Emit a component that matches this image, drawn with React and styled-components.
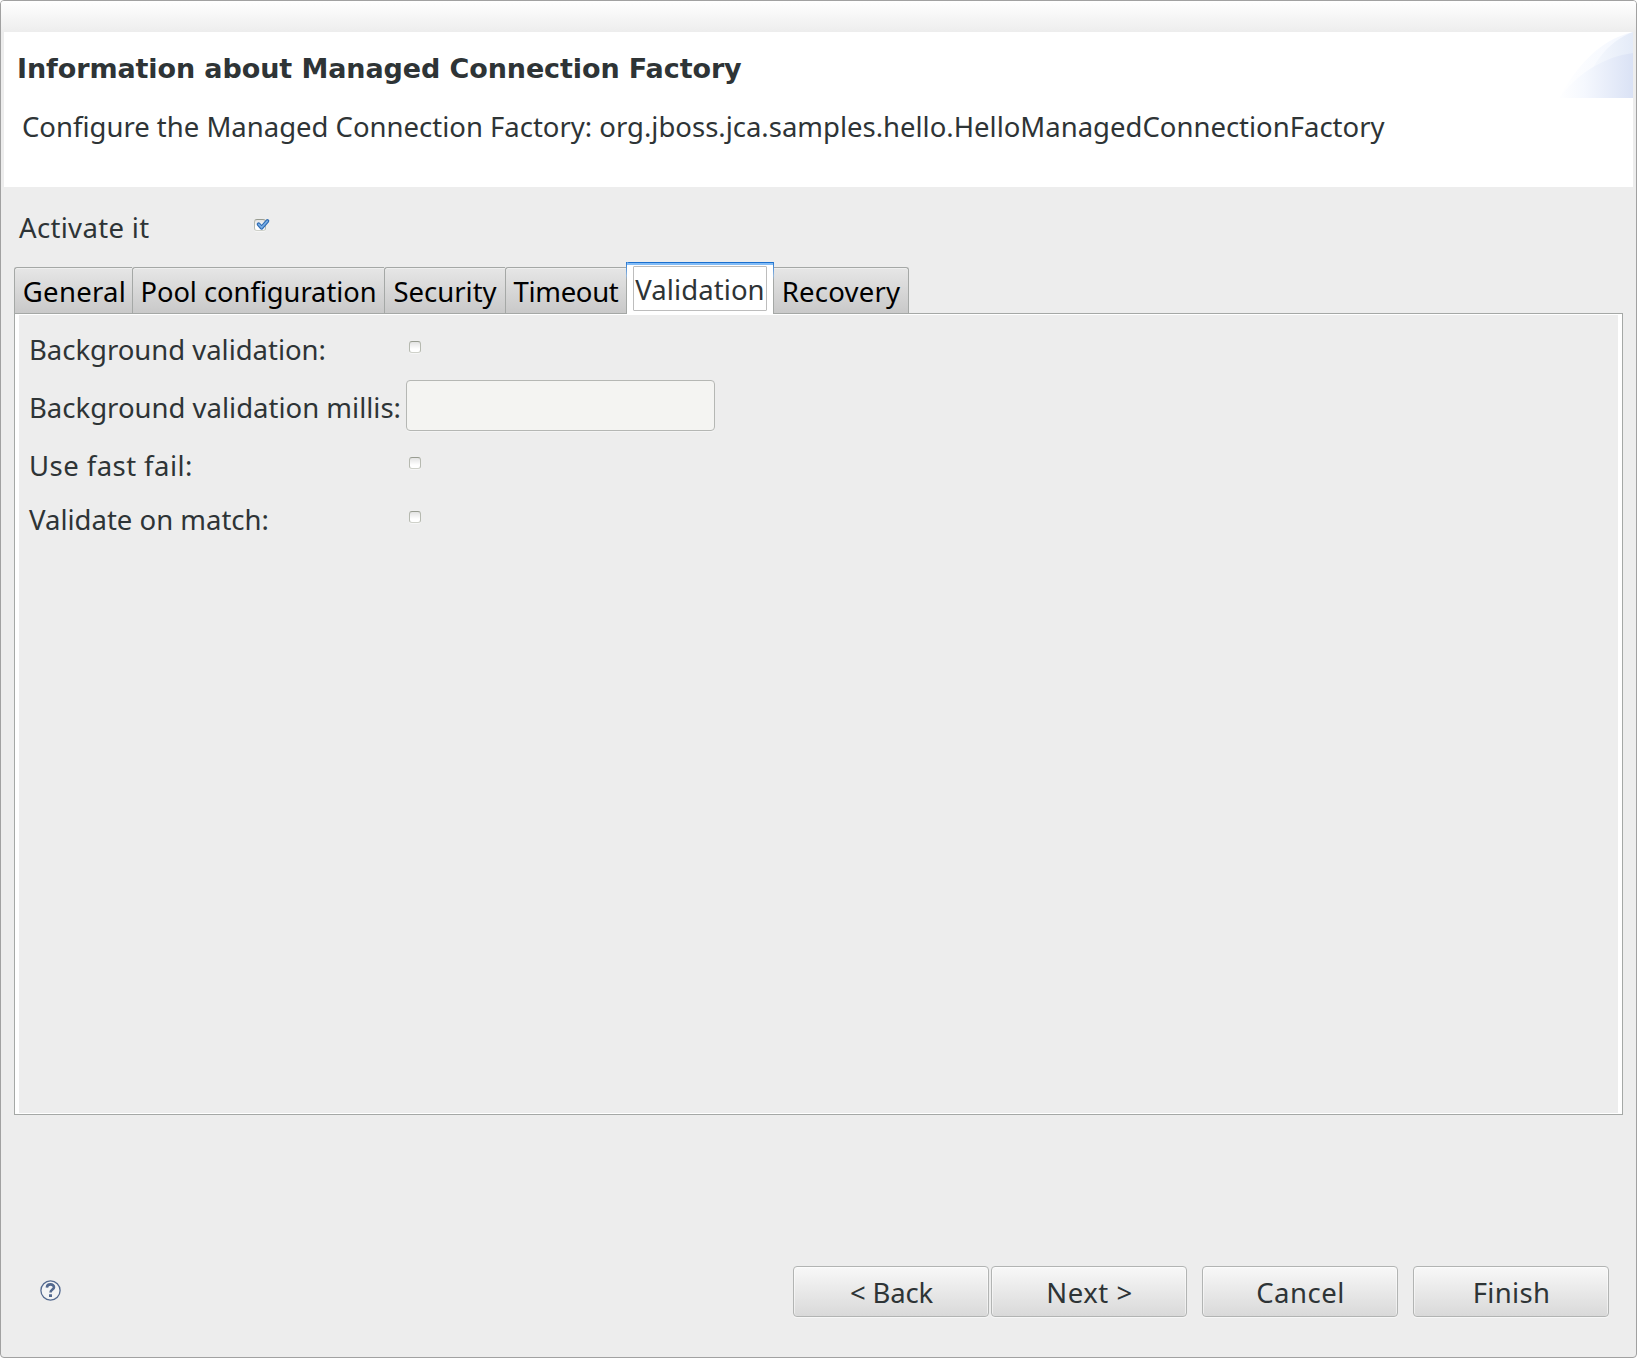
import React from 'react';
import styled, { createGlobalStyle, css } from 'styled-components';

const GlobalStyle = createGlobalStyle`
  *, *::before, *::after { box-sizing: border-box; }
  body {
    margin: 0;
    background: #fff;
    overflow: hidden;
  }
`;

const Dialog = styled.main`
  display: flex;
  flex-direction: column;
  width: 1637px;
  height: 1358px;
  border: 1px solid #a1a1a1;
  border-radius: 4px;
  background: #ededed;
  color: #2e3436;
  font-family: 'Noto Sans', 'Open Sans', sans-serif;
  font-size: 27.5px;
  line-height: 40px;
  white-space: nowrap;
  overflow: hidden;
`;

const TitleBar = styled.div`
  height: 31px;
  flex: none;
  background: linear-gradient(#ffffff, #ededed);
`;

const Header = styled.header`
  display: flex;
  justify-content: space-between;
  align-items: flex-start;
  height: 155px;
  flex: none;
  margin: 0 3px;
  background: #fff;
`;

const HeaderText = styled.div`
  display: flex;
  flex-direction: column;
  padding: 17px 0 0 13px;
`;

const Title = styled.h1`
  margin: 0;
  font: bold 27px/40px 'DejaVu Sans', sans-serif;
  letter-spacing: -0.1px;
`;

const Description = styled.p`
  margin: 18px 0 0 5px;
  font-size: 27.49px;
`;

const ActivateRow = styled.label`
  display: flex;
  align-items: center;
  height: 63px;
  margin: 8px 0 4px;
  padding-left: 18px;
`;

const ActivateLabel = styled.span`
  width: 235px;
  padding-top: 2px;
  letter-spacing: 0.33px;
`;

const Box = styled.span`
  display: block;
  flex: none;
  width: 12px;
  height: 12px;
  margin-bottom: 3px;
  border: 1px solid;
  border-color: #989c91 #b6b9b0 #cfd1ca;
  border-radius: 3px;
  background: linear-gradient(#e3e3e3, #ffffff 70%);
  box-shadow: 0 1px 0 #f6f6f6;
`;

const CheckMark = styled.svg`
  display: block;
  overflow: visible;
  width: 14px;
  height: 12px;
  margin: -1px 0 0 1px;
`;

const TabList = styled.div`
  display: flex;
  align-items: flex-end;
  height: 52px;
  flex: none;
  margin: 0 13px -1px;
  z-index: 1;
`;

const activeTab = css`
  height: 52px;
  padding: 4px 6px 3px;
  border: 1px solid #a5a8a6;
  border-width: 0 1px;
  border-image: linear-gradient(#1b70cf, #8fb4dc 14px, #a5a8a6 18px) 1;
  background: linear-gradient(#1b70cf 1px, #83bcf6 1px, #83bcf6 3px, #ffffff 3px);
  color: #2e3436;
`;

const idleTab = css`
  height: 46px;
  margin-bottom: 1px;
  padding: 2px 0 0 ${(p) => p.$nudge || 0}px;
  border: solid #a5a8a6;
  border-width: 1px ${(p) => (p.$last ? '1px' : '0')} 0 ${(p) => (p.$last ? '0' : '1px')};
  background: linear-gradient(#e6e6e6, #c9c9c9);
  color: #000;
  box-shadow: inset 0 1px 0 #efefef;
`;

const Tab = styled.button`
  display: flex;
  justify-content: center;
  align-items: center;
  width: ${(p) => p.$width}px;
  flex: none;
  padding: 0;
  border-radius: ${(p) => (p.$last ? '0 3px 0 0' : '3px 0 0 0')};
  font: inherit;
  font-size: ${(p) => p.$size || 27.5}px;
  letter-spacing: ${(p) => p.$spacing || 0}px;
  ${(p) => (p.$active ? activeTab : idleTab)}
`;

const FocusRing = styled.span`
  display: flex;
  justify-content: center;
  align-items: center;
  width: 134px;
  height: 45px;
  padding-top: 3px;
  border: 1px solid #bdbdbd;
  border-radius: 1px;
`;

const Panel = styled.section`
  display: flex;
  flex-direction: column;
  width: 1609px;
  height: 802px;
  flex: none;
  margin-left: 13px;
  padding: 6px 0 0 9px;
  border: 1px solid #a5a8a6;
  box-shadow: inset 4px 0 #fff, inset -4px 0 #fff, inset 0 1px #fff, inset 0 -1px #fff;
`;

const FieldRow = styled.label`
  display: grid;
  grid-template-columns: 377px auto;
  align-items: center;
  justify-content: start;
  height: ${(p) => p.$height}px;
  padding-left: 5px;
`;

const FieldLabel = styled.span`
  padding-top: 3px;
  letter-spacing: ${(p) => p.$spacing || 0}px;
`;

const FieldControl = styled.span`
  display: flex;
  padding-left: ${(p) => (p.$check ? 3 : 0)}px;
`;

const TextInput = styled.input`
  width: 309px;
  height: 51px;
  margin: 0 0 2px;
  padding: 0 8px;
  border: 1px solid #b5b7b4;
  border-radius: 4px;
  background: #f4f4f2;
  box-shadow: 0 1px 0 #f4f4f4;
  font: inherit;
`;

const Footer = styled.footer`
  display: flex;
  align-items: center;
  margin-top: auto;
  padding: 0 27px 40px 39px;
`;

const HelpIcon = styled.svg`
  display: block;
  width: 21px;
  height: 21px;
  margin: 0 auto 3px 0;
`;

const Button = styled.button`
  width: 196px;
  height: 51px;
  margin-left: ${(p) => p.$gap}px;
  padding: 3px 0 0 1px;
  border: 1px solid #b2b4b3;
  border-radius: 4px;
  background: linear-gradient(#f8f8f8, #d9d9d9);
  box-shadow: inset 0 1px #fcfcfc, inset 1px 0 #ffffff80, inset -1px 0 #ffffff80, 0 1px 0 #f7f7f7;
  color: #2e3436;
  font: inherit;
  letter-spacing: ${(p) => p.$spacing}px;
`;

const Banner = () => (
  <svg width="75" height="66" viewBox="0 0 75 66">
    <defs>
      <linearGradient id="outer" x1="0" x2="75" gradientUnits="userSpaceOnUse">
        <stop offset="0" stopColor="#fff" />
        <stop offset="1" stopColor="#f2f6fe" />
      </linearGradient>
      <linearGradient id="upper" x1="24" x2="75" gradientUnits="userSpaceOnUse">
        <stop offset="0" stopColor="#fafcff" />
        <stop offset="1" stopColor="#e4ebf8" />
      </linearGradient>
      <linearGradient id="lower" x1="0" x2="75" gradientUnits="userSpaceOnUse">
        <stop offset="0" stopColor="#fff" />
        <stop offset="0.35" stopColor="#f5f8fe" />
        <stop offset="1" stopColor="#dae2f5" />
      </linearGradient>
    </defs>
    <path d="M1 66C17 37 40 8 75 0V66Z" fill="url(#outer)" />
    <path d="M24 66C30 36 48 10 75 0V66Z" fill="url(#upper)" />
    <path d="M1 66C19 42 45 25 75 21V66Z" fill="url(#lower)" />
  </svg>
);

const tabs = [
  { label: 'General', width: 118, spacing: 0.3, nudge: 2 },
  { label: 'Pool configuration', width: 252, size: 27.25 },
  { label: 'Security', width: 121 },
  { label: 'Timeout', width: 121, spacing: -0.33 },
  { label: 'Validation', width: 148, spacing: 0.08, active: true },
  { label: 'Recovery', width: 135, spacing: 0.2, last: true },
];

const fields = [
  { label: 'Background validation:', height: 57, spacing: -0.03 },
  { label: 'Background validation millis:', height: 58, text: true },
  { label: 'Use fast fail:', height: 58, spacing: 0.45 },
  { label: 'Validate on match:', height: 50 },
];

const buttons = [
  { label: '< Back', gap: 0, spacing: -0.2 },
  { label: 'Next >', gap: 2, spacing: 0.55 },
  { label: 'Cancel', gap: 15, spacing: 0.5 },
  { label: 'Finish', gap: 15, spacing: 0.3 },
];

export default function App() {
  return (
    <>
      <GlobalStyle />
      <Dialog>
        <TitleBar />
        <Header>
          <HeaderText>
            <Title>Information about Managed Connection Factory</Title>
            <Description>
              Configure the Managed Connection Factory: org.jboss.jca.samples.hello.HelloManagedConnectionFactory
            </Description>
          </HeaderText>
          <Banner />
        </Header>
        <ActivateRow>
          <ActivateLabel>Activate it</ActivateLabel>
          <Box>
            <CheckMark viewBox="0 0 14 12">
              <path d="M2.6 5.2L5.6 8.8L11.4 2" fill="none" stroke="#2f6cb3" strokeWidth="3.8" strokeLinejoin="round" strokeLinecap="round" />
              <path d="M2.8 5.4L5.6 8.5L11.2 2.2" fill="none" stroke="#79aee6" strokeWidth="1.7" strokeLinecap="round" />
            </CheckMark>
          </Box>
        </ActivateRow>
        <TabList>
          {tabs.map((t) => (
            <Tab
              key={t.label}
              $width={t.width}
              $size={t.size}
              $spacing={t.spacing}
              $nudge={t.nudge}
              $active={t.active}
              $last={t.last}
            >
              {t.active ? <FocusRing>{t.label}</FocusRing> : t.label}
            </Tab>
          ))}
        </TabList>
        <Panel>
          {fields.map((f) => (
            <FieldRow key={f.label} $height={f.height}>
              <FieldLabel $spacing={f.spacing}>{f.label}</FieldLabel>
              <FieldControl $check={!f.text}>{f.text ? <TextInput disabled /> : <Box />}</FieldControl>
            </FieldRow>
          ))}
        </Panel>
        <Footer>
          <HelpIcon viewBox="0 0 21 21" fill="none" stroke="#53698f">
            <circle cx="10.5" cy="10.5" r="9.6" fill="#f3f4f5" strokeWidth="1.3" />
            <path d="M6.9 7.6C7 5.3 8.4 4.4 10.5 4.4C12.7 4.4 14 5.5 14 7.2C14 9.6 10.5 9.5 10.5 12.6" strokeWidth="2.6" />
            <path d="M10.5 14.2V17" strokeWidth="3" />
          </HelpIcon>
          {buttons.map((b) => (
            <Button key={b.label} $gap={b.gap} $spacing={b.spacing}>{b.label}</Button>
          ))}
        </Footer>
      </Dialog>
    </>
  );
}
